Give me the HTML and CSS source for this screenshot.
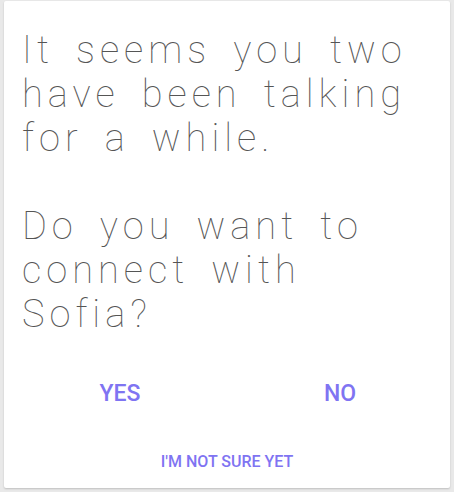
FILE: index.html
```html
<!DOCTYPE html>
<html>
<head>
<meta charset="utf-8">
<link rel="stylesheet" href="styles.css">
</head>
<body>
<div class="dialog">
  <p class="message">It seems you two have been talking for a while.<br><br>Do you want to connect with Sofia?</p>
  <div class="actions">
    <button class="btn btn-main">YES</button>
    <button class="btn btn-main">NO</button>
  </div>
  <button class="btn btn-small">I'M NOT SURE YET</button>
</div>
</body>
</html>
```
FILE: styles.css
```css
html, body {
  margin: 0;
  padding: 0;
  background: #e9e9e9;
}
body {
  width: 454px;
  height: 492px;
  padding: 1px 4px 4px 4px;
  box-sizing: border-box;
}
.dialog {
  background: #fff;
  height: 487px;
  border-radius: 2px;
  box-shadow: 0 1px 2px rgba(0,0,0,0.18);
  display: flex;
  flex-direction: column;
  box-sizing: border-box;
}
.message {
  margin: 0;
  padding: 27px 18px 0 18px;
  font-family: Roboto, sans-serif;
  font-weight: 100;
  font-size: 38px;
  line-height: 44px;
  letter-spacing: 5px;
  word-spacing: 8px;
  color: #555;
}
.actions {
  display: grid;
  grid-template-columns: 1fr 1fr;
  margin-top: 43px;
  padding-left: 6px;
}
.btn {
  background: none;
  border: none;
  font-family: Roboto, sans-serif;
  font-weight: 500;
  color: #7f74f2;
  padding: 0;
  cursor: pointer;
}
.btn-main {
  font-size: 23px;
  line-height: 30px;
}
.btn-small {
  margin-top: 43px;
  font-size: 16px;
  line-height: 20px;
  align-self: center;
}
```
